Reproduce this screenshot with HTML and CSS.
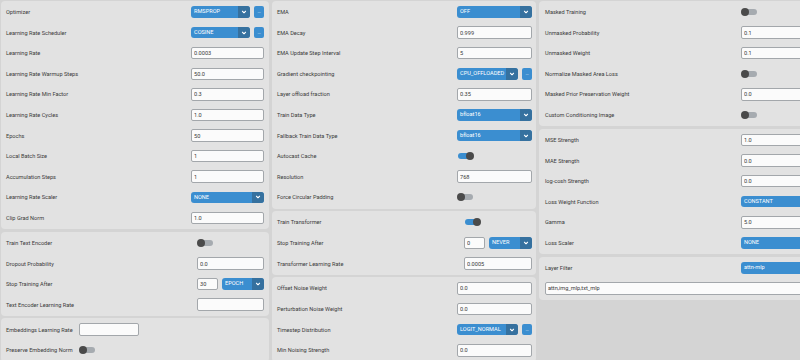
FILE: index.html
```html
<html>
  <head>
    <link rel="stylesheet" href="styles.css">
  </head>
  <body>
    <div class="page">
      <div class="col col1">
        <section class="panel w73">
          <div class="row"><span class="label">Optimizer</span><div class="ctl"><div class="select short"><span>RMSPROP</span><i class="arrow"><svg viewBox="0 0 8 8"><polyline points="2.2,3 4,4.8 5.8,3"/></svg></i></div><div class="dots">...</div></div></div>
          <div class="row"><span class="label">Learning Rate Scheduler</span><div class="ctl"><div class="select short"><span>COSINE</span><i class="arrow"><svg viewBox="0 0 8 8"><polyline points="2.2,3 4,4.8 5.8,3"/></svg></i></div><div class="dots">...</div></div></div>
          <div class="row"><span class="label">Learning Rate</span><div class="ctl"><input class="entry" value="0.0003"></div></div>
          <div class="row"><span class="label">Learning Rate Warmup Steps</span><div class="ctl"><input class="entry" value="50.0"></div></div>
          <div class="row"><span class="label">Learning Rate Min Factor</span><div class="ctl"><input class="entry" value="0.3"></div></div>
          <div class="row"><span class="label">Learning Rate Cycles</span><div class="ctl"><input class="entry" value="1.0"></div></div>
          <div class="row"><span class="label">Epochs</span><div class="ctl"><input class="entry" value="50"></div></div>
          <div class="row"><span class="label">Local Batch Size</span><div class="ctl"><input class="entry" value="1"></div></div>
          <div class="row"><span class="label">Accumulation Steps</span><div class="ctl"><input class="entry" value="1"></div></div>
          <div class="row"><span class="label">Learning Rate Scaler</span><div class="ctl"><div class="select"><span>NONE</span><i class="arrow"><svg viewBox="0 0 8 8"><polyline points="2.2,3 4,4.8 5.8,3"/></svg></i></div></div></div>
          <div class="row"><span class="label">Clip Grad Norm</span><div class="ctl"><input class="entry" value="1.0"></div></div>
        </section>
        <section class="panel w67">
          <div class="row"><span class="label">Train Text Encoder</span><div class="ctl"><span class="switch"><b></b></span></div></div>
          <div class="row"><span class="label">Dropout Probability</span><div class="ctl"><input class="entry" value="0.0"></div></div>
          <div class="row"><span class="label">Stop Training After</span><div class="ctl"><input class="entry tiny" value="30"><div class="select"><span>EPOCH</span><i class="arrow"><svg viewBox="0 0 8 8"><polyline points="2.2,3 4,4.8 5.8,3"/></svg></i></div></div></div>
          <div class="row"><span class="label">Text Encoder Learning Rate</span><div class="ctl"><input class="entry" value=""></div></div>
        </section>
        <section class="panel narrow">
          <div class="row"><span class="label">Embeddings Learning Rate</span><div class="ctl"><input class="entry" value=""></div></div>
          <div class="row"><span class="label">Preserve Embedding Norm</span><div class="ctl"><span class="switch"><b></b></span></div></div>
        </section>
      </div>

      <div class="col col2">
        <section class="panel w75">
          <div class="row"><span class="label">EMA</span><div class="ctl"><div class="select"><span>OFF</span><i class="arrow"><svg viewBox="0 0 8 8"><polyline points="2.2,3 4,4.8 5.8,3"/></svg></i></div></div></div>
          <div class="row"><span class="label">EMA Decay</span><div class="ctl"><input class="entry" value="0.999"></div></div>
          <div class="row"><span class="label">EMA Update Step Interval</span><div class="ctl"><input class="entry" value="5"></div></div>
          <div class="row"><span class="label">Gradient checkpointing</span><div class="ctl"><div class="select short"><span>CPU_OFFLOADED</span><i class="arrow"><svg viewBox="0 0 8 8"><polyline points="2.2,3 4,4.8 5.8,3"/></svg></i></div><div class="dots">...</div></div></div>
          <div class="row"><span class="label">Layer offload fraction</span><div class="ctl"><input class="entry" value="0.35"></div></div>
          <div class="row"><span class="label">Train Data Type</span><div class="ctl"><div class="select"><span>bfloat16</span><i class="arrow"><svg viewBox="0 0 8 8"><polyline points="2.2,3 4,4.8 5.8,3"/></svg></i></div></div></div>
          <div class="row"><span class="label">Fallback Train Data Type</span><div class="ctl"><div class="select"><span>bfloat16</span><i class="arrow"><svg viewBox="0 0 8 8"><polyline points="2.2,3 4,4.8 5.8,3"/></svg></i></div></div></div>
          <div class="row"><span class="label">Autocast Cache</span><div class="ctl"><span class="switch on"><b></b></span></div></div>
          <div class="row"><span class="label">Resolution</span><div class="ctl"><input class="entry" value="768"></div></div>
          <div class="row"><span class="label">Force Circular Padding</span><div class="ctl"><span class="switch"><b></b></span></div></div>
        </section>
        <section class="panel w68">
          <div class="row"><span class="label">Train Transformer</span><div class="ctl"><span class="switch on"><b></b></span></div></div>
          <div class="row"><span class="label">Stop Training After</span><div class="ctl"><input class="entry tiny" value="0"><div class="select"><span>NEVER</span><i class="arrow"><svg viewBox="0 0 8 8"><polyline points="2.2,3 4,4.8 5.8,3"/></svg></i></div></div></div>
          <div class="row"><span class="label">Transformer Learning Rate</span><div class="ctl"><input class="entry" value="0.0005"></div></div>
        </section>
        <section class="panel w75">
          <div class="row"><span class="label">Offset Noise Weight</span><div class="ctl"><input class="entry" value="0.0"></div></div>
          <div class="row"><span class="label">Perturbation Noise Weight</span><div class="ctl"><input class="entry" value="0.0"></div></div>
          <div class="row"><span class="label">Timestep Distribution</span><div class="ctl"><div class="select short"><span>LOGIT_NORMAL</span><i class="arrow"><svg viewBox="0 0 8 8"><polyline points="2.2,3 4,4.8 5.8,3"/></svg></i></div><div class="dots">...</div></div></div>
          <div class="row"><span class="label">Min Noising Strength</span><div class="ctl"><input class="entry" value="0.0"></div></div>
        </section>
      </div>

      <div class="col col3">
        <section class="panel w75">
          <div class="row"><span class="label">Masked Training</span><div class="ctl"><span class="switch"><b></b></span></div></div>
          <div class="row"><span class="label">Unmasked Probability</span><div class="ctl"><input class="entry" value="0.1"></div></div>
          <div class="row"><span class="label">Unmasked Weight</span><div class="ctl"><input class="entry" value="0.1"></div></div>
          <div class="row"><span class="label">Normalize Masked Area Loss</span><div class="ctl"><span class="switch"><b></b></span></div></div>
          <div class="row"><span class="label">Masked Prior Preservation Weight</span><div class="ctl"><input class="entry" value="0.0"></div></div>
          <div class="row"><span class="label">Custom Conditioning Image</span><div class="ctl"><span class="switch"><b></b></span></div></div>
        </section>
        <section class="panel w75">
          <div class="row"><span class="label">MSE Strength</span><div class="ctl"><input class="entry" value="1.0"></div></div>
          <div class="row"><span class="label">MAE Strength</span><div class="ctl"><input class="entry" value="0.0"></div></div>
          <div class="row"><span class="label">log-cosh Strength</span><div class="ctl"><input class="entry" value="0.0"></div></div>
          <div class="row"><span class="label">Loss Weight Function</span><div class="ctl"><div class="select"><span>CONSTANT</span><i class="arrow"><svg viewBox="0 0 8 8"><polyline points="2.2,3 4,4.8 5.8,3"/></svg></i></div></div></div>
          <div class="row"><span class="label">Gamma</span><div class="ctl"><input class="entry" value="5.0"></div></div>
          <div class="row"><span class="label">Loss Scaler</span><div class="ctl"><div class="select"><span>NONE</span><i class="arrow"><svg viewBox="0 0 8 8"><polyline points="2.2,3 4,4.8 5.8,3"/></svg></i></div></div></div>
        </section>
        <section class="panel w75">
          <div class="row"><span class="label">Layer Filter</span><div class="ctl"><div class="select"><span>attn-mlp</span><i class="arrow"><svg viewBox="0 0 8 8"><polyline points="2.2,3 4,4.8 5.8,3"/></svg></i></div></div></div>
          <div class="row"><input class="entry wide" value="attn,img_mlp,txt_mlp"></div>
        </section>
      </div>
    </div>
  </body>
</html>
```

FILE: styles.css
```css
* {
  box-sizing: border-box;
}

body {
  margin: 0;
  background-color: #d4d4d4;
  color: #3a3a3a;
  font-family: Roboto, "Liberation Sans", sans-serif;
  font-size: 5.6px;
  overflow: hidden;
}

.page {
  display: flex;
  align-items: flex-start;
  gap: 3px;
  width: 840px;
  padding: 0.7px 0 0 1px;
}

.col {
  display: flex;
  flex-direction: column;
  gap: 2.4px;
}

.col1 {
  width: 268px;
}

.col2 {
  width: 264px;
}

.col3 {
  width: 282px;
}

.panel {
  background-color: #e2e2e2;
  border-radius: 4px;
  padding: 1px 5px 1px 5px;
  --ctl: 73px;
}

.col2 .panel {
  padding-right: 4px;
}

.col3 .panel {
  padding-left: 6px;
}

.w67 { --ctl: 67px; }
.w68 { --ctl: 68px; }
.w75 { --ctl: 75px; }

.row {
  display: flex;
  align-items: center;
  height: 20.6px;
}

.label {
  flex: 1;
  white-space: nowrap;
}

.ctl {
  width: var(--ctl);
  display: flex;
  align-items: center;
  gap: 4px;
}

.narrow .label {
  flex: 0 0 73px;
}

.narrow .ctl {
  width: 60px;
}

.entry {
  display: block;
  width: 100%;
  height: 12.5px;
  margin: 0;
  padding: 0 2px;
  border: 1px solid #a3a7ab;
  border-radius: 2px;
  background-color: #fbfbfb;
  color: #3a3a3a;
  font-family: inherit;
  font-size: 5.6px;
  outline: none;
}

.entry.tiny {
  flex: 0 0 21px;
}

.entry.wide {
  width: 100%;
}

.select {
  flex: 1;
  display: flex;
  height: 11.5px;
  border-radius: 3px;
  overflow: hidden;
  background-color: #3b8ed0;
  color: #fff;
  min-width: 0;
}

.select span {
  flex: 1;
  padding-left: 3px;
  line-height: 11.5px;
  white-space: nowrap;
}

.select .arrow {
  flex: 0 0 12px;
  display: flex;
  align-items: center;
  justify-content: center;
  background-color: #36719f;
}

.select svg {
  width: 8px;
  height: 8px;
  fill: none;
  stroke: #fff;
  stroke-width: 1.1;
}

.dots {
  flex: 0 0 10px;
  height: 11.5px;
  border-radius: 2px;
  background-color: #3b8ed0;
  color: #e8f1f9;
  font-size: 5px;
  line-height: 10px;
  letter-spacing: -0.3px;
  text-align: center;
}

.switch {
  position: relative;
  display: block;
  width: 15px;
  height: 6px;
  margin-left: 1px;
  border-radius: 3px;
  background-color: #a6abb0;
}

.switch b {
  position: absolute;
  top: -1px;
  left: -1px;
  width: 8px;
  height: 8px;
  border-radius: 50%;
  background-color: #4a4a4a;
}

.switch.on {
  background-color: #3b8ed0;
}

.switch.on b {
  left: auto;
  right: -1px;
}
```
